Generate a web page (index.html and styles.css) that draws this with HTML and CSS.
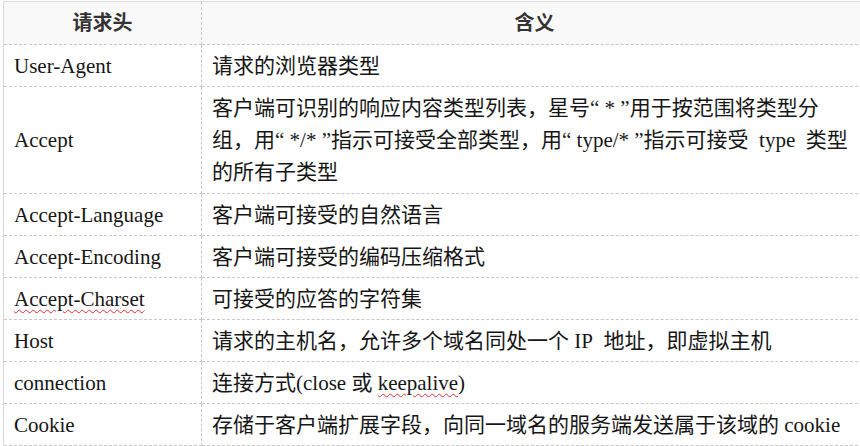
FILE: index.html
```html
<!DOCTYPE html>
<html lang="zh">
<head>
<meta charset="utf-8">
<title>请求头</title>
<link rel="stylesheet" href="styles.css">
</head>
<body>
<table class="headers">
  <thead>
    <tr>
      <th class="col-name">请求头</th>
      <th class="col-desc">含义</th>
    </tr>
  </thead>
  <tbody>
    <tr><td>User-Agent</td><td>请求的浏览器类型</td></tr>
    <tr class="tall"><td>Accept</td><td class="nowrap">客户端可识别的响应内容类型列表，星号“ * ”用于按范围将类型分<br>组，用“ */* ”指示可接受全部类型，用“ type/* ”指示可接受&nbsp; type&nbsp; 类型<br>的所有子类型</td></tr>
    <tr><td>Accept-Language</td><td>客户端可接受的自然语言</td></tr>
    <tr><td>Accept-Encoding</td><td>客户端可接受的编码压缩格式</td></tr>
    <tr><td><span class="spell">Accept-Charset</span></td><td>可接受的应答的字符集</td></tr>
    <tr><td>Host</td><td>请求的主机名，允许多个域名同处一个 IP&nbsp; 地址，即虚拟主机</td></tr>
    <tr><td>connection</td><td>连接方式(close 或 <span class="spell">keepalive</span>)</td></tr>
    <tr><td>Cookie</td><td class="nowrap">存储于客户端扩展字段，向同一域名的服务端发送属于该域的 cookie</td></tr>
  </tbody>
</table>
</body>
</html>
```
FILE: styles.css
```css
html, body {
  margin: 0;
  padding: 0;
  background: #ffffff;
}

.headers {
  margin: 1px 0 0 3px;
  width: 860px;
  border-collapse: collapse;
  table-layout: fixed;
  font-family: "Liberation Serif", "Noto Sans CJK SC", serif;
  font-size: 21px;
  color: #161616;
  border-left: 1px solid #d8d8d8;
  border-top: 1px solid #dcdcdc;
}

.col-name {
  width: 177px;
}

.headers th {
  background: #f9f9f9;
  font-weight: bold;
  color: #333;
  text-align: center;
  padding: 5px 10px 5px;
  line-height: 32px;
  font-size: 20px;
  border-bottom: 1px dashed #c8c8c8;
  border-right: 1px dashed #c8c8c8;
}

.headers th.col-desc {
  border-right: none;
  padding-right: 6px;
}

.headers td {
  padding: 5px 10px 4px;
  line-height: 32px;
  vertical-align: middle;
  border-bottom: 1px dashed #c8c8c8;
  border-right: 1px dashed #c8c8c8;
}

.headers .tall td {
  padding-bottom: 5px;
}

.headers td:last-child {
  border-right: none;
  padding-left: 10px;
}

.nowrap {
  white-space: nowrap;
}

.spell {
  text-decoration: underline wavy #e03030;
  text-decoration-thickness: 1px;
  text-underline-offset: 3px;
}
```
